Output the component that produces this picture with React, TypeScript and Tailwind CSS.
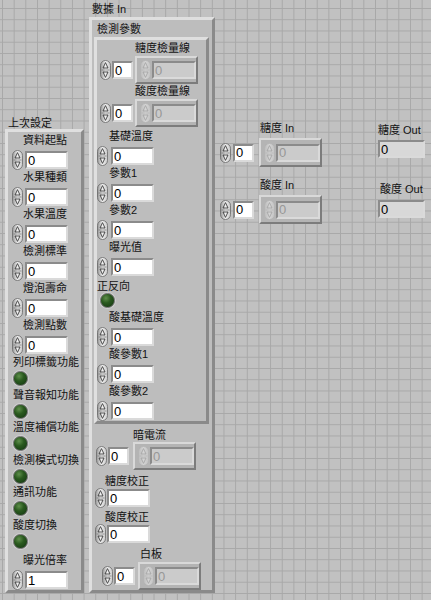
import React, { useId } from 'react';

function Spinner({ disabled = false }: { disabled?: boolean }) {
  const id = 'g' + useId().replace(/[^a-zA-Z0-9]/g, '');
  const edge = disabled ? '#b2b2b2' : '#6a6a6a';
  const arrow = disabled ? '#a2a2a2' : '#2c2c2c';
  return (
    <svg width="11" height="20" viewBox="0 0 11 20" className="block shrink-0">
      <defs>
        <linearGradient id={id} x1="0" y1="0" x2="1" y2="0">
          <stop offset="0" stopColor={disabled ? '#bcbcbc' : '#959595'} />
          <stop offset="0.5" stopColor={disabled ? '#d4d4d4' : '#f0f0f0'} />
          <stop offset="1" stopColor={disabled ? '#c4c4c4' : '#c9c9c9'} />
        </linearGradient>
      </defs>
      <rect x="0.5" y="0.5" width="10" height="19" rx="5" fill={`url(#${id})`} stroke={edge} strokeWidth="0.8" />
      <line x1="1.5" y1="10" x2="9.5" y2="10" stroke={edge} strokeWidth="0.6" />
      <path d="M5.5 2.6 L8 8 L3 8 Z" fill="none" stroke={arrow} strokeWidth="0.8" strokeLinejoin="round" />
      <path d="M5.5 17.4 L8 12 L3 12 Z" fill="none" stroke={arrow} strokeWidth="0.8" strokeLinejoin="round" />
    </svg>
  );
}

function Box({ w, kind = 'ctl', value = '0' }: { w: string; kind?: 'ctl' | 'ind' | 'dis'; value?: string }) {
  const bg =
    kind === 'ctl'
      ? 'bg-white text-[#000]'
      : kind === 'ind'
      ? 'bg-[#d8d8d8] text-[#000]'
      : 'bg-[#cbcbcb] text-[#979797]';
  return (
    <div
      className={`${w} ${bg} h-[18px] shrink-0 border-2 border-t-[#8b8b8b] border-l-[#8b8b8b] border-r-[#dadada] border-b-[#dadada] flex items-center pl-[1px] text-[13px] leading-none font-['Liberation_Sans',sans-serif]`}
    >
      {value}
    </div>
  );
}

function Label({ children, cls = '' }: { children: React.ReactNode; cls?: string }) {
  return <div className={`text-[11px] text-[#121212] whitespace-nowrap ${cls}`}>{children}</div>;
}

function Led() {
  return (
    <div className="w-[15px] h-[15px] rounded-full border border-[#6e6e6e] shadow-[0_0_0_1px_#cfcfcf] bg-[radial-gradient(circle_at_38%_32%,#5f8f4c_0%,#2a5a1f_40%,#113210_100%)]" />
  );
}

function NumRow({ rowCls, value = '0' }: { rowCls: string; value?: string }) {
  return (
    <div className={`h-[20px] flex items-center ${rowCls}`}>
      <Spinner />
      <Box w="w-[43px]" value={value} />
    </div>
  );
}

function ArrayCtl({ cls, idxGap, frameGap, frameH = 'h-[28px]' }: { cls: string; idxGap: string; frameGap: string; frameH?: string }) {
  return (
    <div className={`flex items-center ${cls}`}>
      <Spinner />
      <div className={idxGap}>
        <Box w="w-[21px]" />
      </div>
      <div
        className={`${frameGap} ${frameH} w-[63px] shrink-0 border-2 border-t-[#d9d9d9] border-l-[#d9d9d9] border-r-[#7c7c7c] border-b-[#7c7c7c] bg-[#b4b4b4] flex items-center pl-[3px] gap-[1px]`}
      >
        <Spinner disabled />
        <Box w="w-[44px]" kind="dis" />
      </div>
    </div>
  );
}

const frame =
  'border-[3px] border-t-[#dfdfdf] border-l-[#dfdfdf] border-r-[#8a8a8a] border-b-[#8a8a8a] bg-[#bdbdbd]';

export default function App() {
  const leftNums = ['資料起點', '水果種類', '水果溫度', '檢測標準', '燈泡壽命', '檢測點數'];
  const leftLeds = ['列印標籤功能', '聲音報知功能', '溫度補償功能', '檢測模式切換', '通訊功能', '酸度切換'];
  const midNums = ['基礎溫度', '參數1', '參數2', '曝光值'];
  const midNums2 = ['酸基礎溫度', '酸參數1', '酸參數2'];
  return (
    <div className="w-[431px] h-[600px] overflow-hidden flex items-start bg-[#c1c1c1] bg-[linear-gradient(to_right,#a8a8a8_1px,transparent_1px),linear-gradient(to_bottom,#a8a8a8_1px,transparent_1px)] bg-[size:11.67px_11.25px] bg-[position:2px_8px] font-['Liberation_Sans','Noto_Sans_CJK_TC',sans-serif]">
      {/* 上次設定 */}
      <div className="ml-[5px] mt-[117px] w-[79px] shrink-0">
        <Label cls="h-[12px] leading-[12px] pl-[3px]">上次設定</Label>
        <div className={`${frame} h-[464px] pt-[1px]`}>
          {leftNums.map((t) => (
            <div key={t}>
              <Label cls="h-[14px] leading-[14px] pl-[15px]">{t}</Label>
              <NumRow rowCls="mt-[3px] pl-[4px] gap-[2px]" />
            </div>
          ))}
          {leftLeds.map((t) => (
            <div key={t}>
              <Label cls="h-[15px] leading-[15px] pl-[5px]">{t}</Label>
              <div className="h-[17.5px] flex items-center pl-[5px]">
                <Led />
              </div>
            </div>
          ))}
          <Label cls="mt-[3px] h-[14px] leading-[14px] pl-[15px]">曝光倍率</Label>
          <NumRow rowCls="mt-[3px] pl-[4px] gap-[2px]" value="1" />
        </div>
      </div>

      {/* 數據 In */}
      <div className="ml-[5px] mt-[2px] w-[126px] shrink-0">
        <Label cls="h-[15px] leading-[15px] pl-[3px]">數據 In</Label>
        <div className={`${frame} h-[576px]`}>
          <Label cls="mt-[2px] h-[15px] leading-[15px] pl-[5px]">檢測參數</Label>
          <div className={`${frame} ml-[2px] w-[115px] h-[387px] pt-[1px]`}>
            <Label cls="h-[15px] leading-[15px] pl-[38px]">糖度檢量線</Label>
            <ArrayCtl cls="pl-[3px]" idxGap="ml-[1px]" frameGap="ml-[2px]" />
            <Label cls="h-[15px] leading-[15px] pl-[38px]">酸度檢量線</Label>
            <ArrayCtl cls="pl-[3px]" idxGap="ml-[1px]" frameGap="ml-[2px]" />
            <div className="mt-[2px]">
              {midNums.map((t) => (
                <div key={t}>
                  <Label cls="h-[14px] leading-[14px] pl-[12px]">{t}</Label>
                  <NumRow rowCls="mt-[3px] gap-[3px]" />
                </div>
              ))}
            </div>
            <Label cls="mt-[2px] h-[14px] leading-[14px]">正反向</Label>
            <div className="h-[15px] flex items-center pl-[3px]">
              <Led />
            </div>
            <div className="mt-[2px]">
              {midNums2.map((t) => (
                <div key={t}>
                  <Label cls="h-[14px] leading-[14px] pl-[12px]">{t}</Label>
                  <NumRow rowCls="mt-[3px] gap-[3px]" />
                </div>
              ))}
            </div>
          </div>
          <Label cls="mt-[4px] h-[14px] leading-[14px] pl-[41px]">暗電流</Label>
          <ArrayCtl cls="pl-[4px]" idxGap="ml-[1px]" frameGap="ml-[4px]" />
          <Label cls="mt-[4px] h-[14px] leading-[14px] pl-[13px]">糖度校正</Label>
          <NumRow rowCls="pl-[3px] gap-[1px]" />
          <Label cls="mt-[2px] h-[14px] leading-[14px] pl-[13px]">酸度校正</Label>
          <NumRow rowCls="pl-[3px] gap-[1px]" />
          <Label cls="mt-[3px] h-[14px] leading-[14px] pl-[48px]">白板</Label>
          <ArrayCtl cls="mt-[1px] pl-[10px]" idxGap="ml-[1px]" frameGap="ml-[3px]" />
        </div>
      </div>

      {/* 糖度 In / 酸度 In */}
      <div className="ml-[5px] mt-[121px] w-[102px] shrink-0">
        <Label cls="h-[15px] leading-[15px] pl-[40px]">糖度 In</Label>
        <ArrayCtl cls="mt-[2px]" idxGap="ml-[2px]" frameGap="ml-[5px]" frameH="h-[29px]" />
        <Label cls="mt-[11px] h-[15px] leading-[15px] pl-[40px]">酸度 In</Label>
        <ArrayCtl cls="mt-[2px]" idxGap="ml-[2px]" frameGap="ml-[5px]" frameH="h-[29px]" />
      </div>

      {/* Out */}
      <div className="ml-[56px] mt-[123px] w-[47px] shrink-0">
        <Label cls="h-[15px] leading-[15px]">糖度 Out</Label>
        <div className="mt-[2px]">
          <Box w="w-[47px]" kind="ind" />
        </div>
        <Label cls="mt-[24px] h-[15px] leading-[15px] pl-[2px]">酸度 Out</Label>
        <div className="mt-[3px]">
          <Box w="w-[47px]" kind="ind" />
        </div>
      </div>
    </div>
  );
}
